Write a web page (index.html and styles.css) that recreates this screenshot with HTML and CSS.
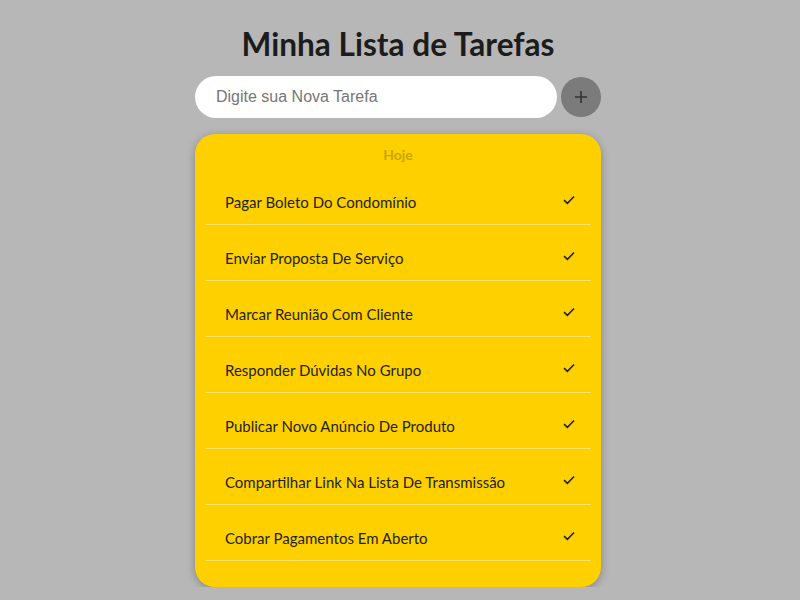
FILE: index.html
```html
<!DOCTYPE html>
<html lang="pt-BR">
<head>
<meta charset="utf-8">
<title>Minha Lista de Tarefas</title>
<link rel="stylesheet" href="styles.css">
</head>
<body>
<main class="app">
  <h1 class="title">Minha Lista de Tarefas</h1>
  <form class="new-task">
    <input class="new-task-input" type="text" placeholder="Digite sua Nova Tarefa">
    <button class="add-btn" type="button" aria-label="Adicionar">
      <svg width="14" height="14" viewBox="0 0 14 14"><path d="M7 1v12M1 7h12" stroke="#333" stroke-width="1.6" fill="none"/></svg>
    </button>
  </form>
  <section class="card">
    <h2 class="card-title">Hoje</h2>
    <ul class="tasks">
      <li class="task"><span>Pagar Boleto Do Condomínio</span><svg class="check" viewBox="0 0 12 10"><path d="M1 5.2l3.4 3.2L11 1.5" stroke="#222" stroke-width="1.6" fill="none"/></svg></li>
      <li class="task"><span>Enviar Proposta De Serviço</span><svg class="check" viewBox="0 0 12 10"><path d="M1 5.2l3.4 3.2L11 1.5" stroke="#222" stroke-width="1.6" fill="none"/></svg></li>
      <li class="task"><span>Marcar Reunião Com Cliente</span><svg class="check" viewBox="0 0 12 10"><path d="M1 5.2l3.4 3.2L11 1.5" stroke="#222" stroke-width="1.6" fill="none"/></svg></li>
      <li class="task"><span>Responder Dúvidas No Grupo</span><svg class="check" viewBox="0 0 12 10"><path d="M1 5.2l3.4 3.2L11 1.5" stroke="#222" stroke-width="1.6" fill="none"/></svg></li>
      <li class="task"><span>Publicar Novo Anúncio De Produto</span><svg class="check" viewBox="0 0 12 10"><path d="M1 5.2l3.4 3.2L11 1.5" stroke="#222" stroke-width="1.6" fill="none"/></svg></li>
      <li class="task"><span>Compartilhar Link Na Lista De Transmissão</span><svg class="check" viewBox="0 0 12 10"><path d="M1 5.2l3.4 3.2L11 1.5" stroke="#222" stroke-width="1.6" fill="none"/></svg></li>
      <li class="task"><span>Cobrar Pagamentos Em Aberto</span><svg class="check" viewBox="0 0 12 10"><path d="M1 5.2l3.4 3.2L11 1.5" stroke="#222" stroke-width="1.6" fill="none"/></svg></li>
    </ul>
  </section>
</main>
</body>
</html>
```
FILE: styles.css
```css
* { box-sizing: border-box; }
html, body { margin: 0; padding: 0; }
body {
  background: #b7b7b7;
  font-family: Lato, "Open Sans", sans-serif;
  color: #222;
  padding-right: 4px;
}
.app {
  width: 406px;
  margin: 0 auto;
  padding-top: 22px;
  display: flex;
  flex-direction: column;
  align-items: stretch;
}
.title {
  margin: 0;
  text-align: center;
  font-size: 31.6px;
  font-weight: 700;
  line-height: 44px;
  color: #1c1c1c;
}
.new-task {
  margin: 10px 0 16px;
  display: flex;
  align-items: center;
  gap: 4px;
}
.new-task-input {
  flex: 1;
  height: 42px;
  border: none;
  border-radius: 21px;
  background: #fff;
  padding: 0 21px;
  font-family: "Liberation Sans", Arial, sans-serif;
  font-size: 16px;
  color: #333;
  outline: none;
}
.new-task-input::placeholder { color: #767676; }
.add-btn {
  width: 40px;
  height: 40px;
  border-radius: 50%;
  border: none;
  background: #7b7b7b;
  display: flex;
  align-items: center;
  justify-content: center;
  padding: 0;
}
.card {
  background: #ffd000;
  border-radius: 20px;
  box-shadow: 0 2px 8px rgba(0,0,0,0.28);
  padding: 11px 10px 26px;
}
.card-title {
  margin: 0;
  text-align: center;
  font-size: 14px;
  font-weight: 700;
  line-height: 20px;
  color: #c8a600;
}
.tasks {
  list-style: none;
  margin: 4px 0 0;
  padding: 0;
}
.task {
  display: flex;
  align-items: center;
  justify-content: space-between;
  height: 56px;
  padding: 10px 16px 0 20px;
  border-bottom: 1px solid #ffe36b;
  font-size: 15px;
  line-height: 20px;
  color: #1e1e1e;
}
.check {
  width: 12px;
  height: 10px;
  margin-top: -3px;
}
```
